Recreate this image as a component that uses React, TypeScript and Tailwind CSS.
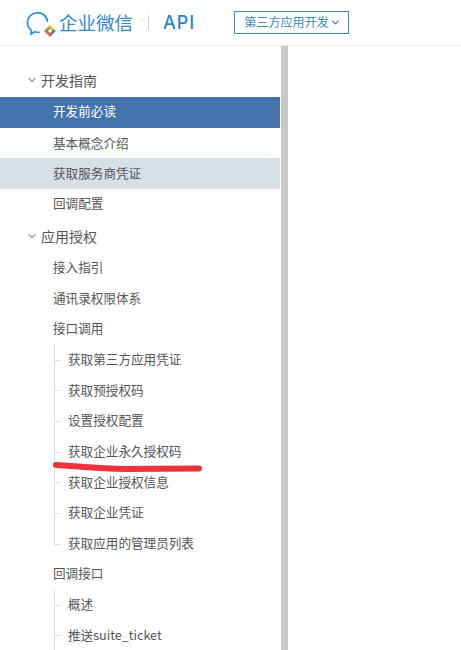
import { ChevronDown } from 'lucide-react';

const fontStack = 'font-["Noto_Sans_CJK_SC","Liberation_Sans",sans-serif]';

function Logo() {
  return (
    <svg width="30" height="28" viewBox="0 0 30 28" fill="none" className="shrink-0">
      <path
        d="M21.5 12.5A10 9.500 0 0 0 1.500 14c0 3 1.600 5.500 4 7.200l-.5 3.800 3.800-2.300c1.300.4 2.700.6 4.200.6"
        stroke="#2e8fdc"
        strokeWidth="1.700"
        strokeLinecap="round"
      />
      <path d="M20 22l4-4" stroke="#4db84a" strokeWidth="2.800" strokeLinecap="round" />
      <path d="M24 18l4 4" stroke="#f2b632" strokeWidth="2.800" strokeLinecap="round" />
      <path d="M28 22l-4 4" stroke="#2e8fdc" strokeWidth="2.800" strokeLinecap="round" />
      <path d="M24 26l-4-4" stroke="#e8663a" strokeWidth="2.800" strokeLinecap="round" />
    </svg>
  );
}

function Header() {
  return (
    <header className="h-[46px] flex items-center border-b border-[#e9ecef] pl-[26px]">
      <Logo />
      <span className="ml-[3px] text-[18.500px] leading-none text-[#2f86cc]">企业微信</span>
      <span className="ml-[15px] h-[15px] w-px bg-[#c9d3da]" />
      <span className='ml-[14px] text-[18px] leading-none text-[#2f82c6] font-["Inter",sans-serif] font-medium tracking-[1px]'>
        API
      </span>
      <button className="ml-[39px] h-[23px] w-[115px] flex items-center pl-[9px] border border-[#3f8ac4] text-[12.100px] leading-none text-[#3f88c0]">
        第三方应用开发
        <ChevronDown size={11} strokeWidth={3} className="ml-[1px]" />
      </button>
    </header>
  );
}

function GroupTitle({ title, className }: { title: string; className: string }) {
  return (
    <div className={`flex items-center pl-[26px] text-[14px] text-[#555] ${className}`}>
      <ChevronDown size={12} strokeWidth={2.500} className="text-[#999] mr-[3px]" />
      <span>{title}</span>
    </div>
  );
}

function Item({ label, active, hover, lift }: { label: string; active?: boolean; hover?: boolean; lift?: boolean }) {
  let tone = 'text-[#555]';
  if (active) tone = 'bg-[#4472ab] text-white';
  if (hover) tone = 'bg-[#d7dfe8] text-[#555]';
  return (
    <div className={`h-[30.670px] flex items-center pl-[53px] text-[12.600px] ${lift ? 'pb-[1px]' : ''} ${tone}`}>
      {label}
    </div>
  );
}

function SubList({ items, open }: { items: string[]; open?: boolean }) {
  return (
    <ul className="ml-[54px]">
      {items.map((label, i) => (
        <li key={label} className="relative h-[30.670px] flex items-center pl-[14px] text-[12.600px] text-[#555]">
          <span
            className={`absolute left-0 top-0 w-px bg-[#dcdcdc] ${i === items.length - 1 && !open ? 'h-1/2' : 'h-full'}`}
          />
          <span className="absolute left-0 top-1/2 w-[6px] h-px bg-[#dcdcdc]" />
          {label}
        </li>
      ))}
    </ul>
  );
}

export default function App() {
  return (
    <div className={`relative h-[650px] w-[461px] overflow-hidden bg-white ${fontStack}`}>
      <Header />
      <div className="flex h-[604px]">
        <nav className="w-[280px] shrink-0 pt-[19px]">
          <GroupTitle title="开发指南" className="h-[32px] pb-[2px]" />
          <Item label="开发前必读" active lift />
          <Item label="基本概念介绍" />
          <Item label="获取服务商凭证" hover />
          <Item label="回调配置" lift />
          <GroupTitle title="应用授权" className="h-[32.670px] pt-[1px]" />
          <Item label="接入指引" />
          <Item label="通讯录权限体系" />
          <Item label="接口调用" />
          <SubList
            items={[
              '获取第三方应用凭证',
              '获取预授权码',
              '设置授权配置',
              '获取企业永久授权码',
              '获取企业授权信息',
              '获取企业凭证',
              '获取应用的管理员列表',
            ]}
          />
          <Item label="回调接口" lift />
          <SubList items={['概述', '推送suite_ticket']} open />
        </nav>
        <div className="ml-[1px] w-[7px] bg-[#c8c8c8]" />
      </div>
      {/* red marker scribble on top of the screenshot */}
      <svg width="160" height="14" viewBox="0 0 160 14" fill="none" className="absolute left-[50px] top-[459px]">
        <path d="M6 6C25 7 50 9.500 75 10C100 10 125 9.500 149 9.500" stroke="#f0323a" strokeWidth="6" strokeLinecap="round" />
      </svg>
    </div>
  );
}
